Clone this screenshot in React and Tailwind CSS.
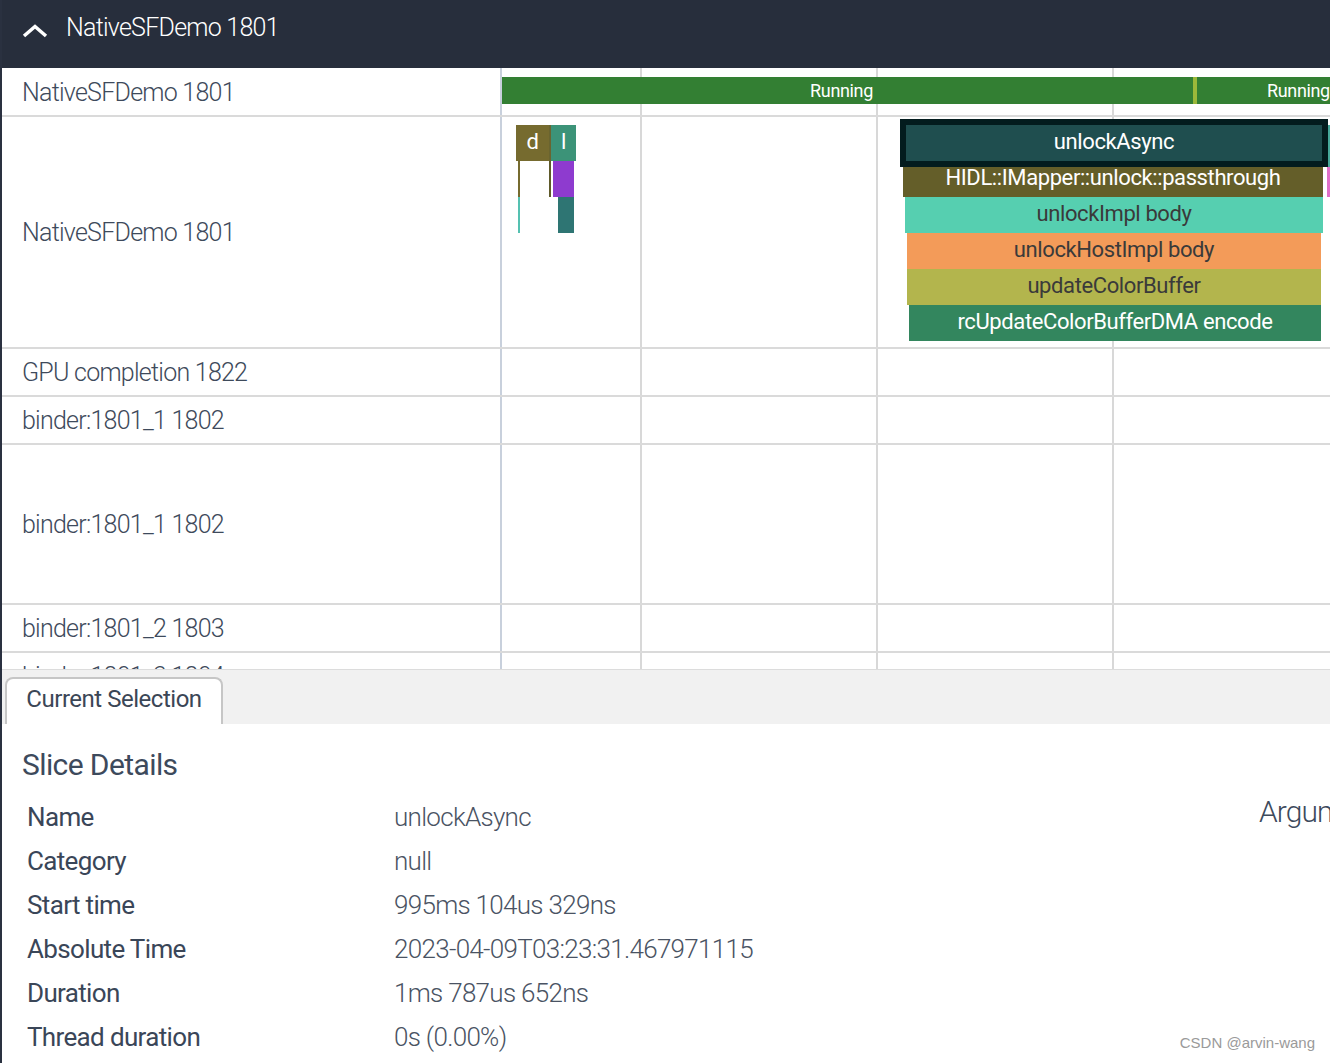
import React from "react";

const rows = [
  { name: "NativeSFDemo 1801", h: "h-[49px]", kind: "running" },
  { name: "NativeSFDemo 1801", h: "h-[232px]", kind: "slices" },
  { name: "GPU completion 1822", h: "h-[48px]" },
  { name: "binder:1801_1 1802", h: "h-[48px]" },
  { name: "binder:1801_1 1802", h: "h-[160px]" },
  { name: "binder:1801_2 1803", h: "h-[48px]" },
  { name: "binder:1801_3 1804", h: "h-[48px]" },
];

const details = [
  ["Name", "unlockAsync"],
  ["Category", "null"],
  ["Start time", "995ms 104us 329ns"],
  ["Absolute Time", "2023-04-09T03:23:31.467971115"],
  ["Duration", "1ms 787us 652ns"],
  ["Thread duration", "0s (0.00%)"],
];

const font = "font-['Roboto','Noto_Sans',sans-serif]";

const GridLines = () => (
  <>
    <div className="absolute top-0 bottom-0 left-[138px] w-[2px] bg-[#d8d8d8]" />
    <div className="absolute top-0 bottom-0 left-[374px] w-[2px] bg-[#d8d8d8]" />
    <div className="absolute top-0 bottom-0 left-[610px] w-[2px] bg-[#d8d8d8]" />
  </>
);

// a slice on the timeline canvas: x / y in page coordinates
const Slice = ({ x, w, y, color, text, dark }) => (
  <div
    className={`absolute h-[36px] flex items-center justify-center pb-[3px] overflow-hidden whitespace-nowrap text-[22px] tracking-[-0.018em] ${
      dark ? "text-[#3a3a3a]" : "text-white"
    } ${color}`}
    style={{ left: x - 502, width: w, top: y - 117 }}
  >
    {text}
  </div>
);

const RunningTrack = () => (
  <div className="relative flex h-full pt-[9px] pb-[11px] text-white text-[18px] tracking-[-0.02em]">
    <div className="w-[691px] shrink-0 bg-[#337f33] flex items-center justify-center pr-[12px]">Running</div>
    <div className="w-[4px] shrink-0 bg-[#9bb83a]" />
    <div className="flex-1 bg-[#337f33] flex items-center pl-[70px] whitespace-nowrap overflow-hidden">Running</div>
  </div>
);

const SliceTrack = () => (
  <>
    {/* small slices on the left */}
    <Slice x={516} w={33} y={125} color="bg-[#766b2f]" text="d" />
    <div className="absolute left-[47px] top-[8px] w-[2px] h-[36px] bg-[#6a6430]" />
    <Slice x={551} w={25} y={125} color="bg-[#3c9378]" text="l" />
    <div className="absolute left-[16px] top-[44px] w-[2px] h-[36px] bg-[#766b2f]" />
    <div className="absolute left-[47px] top-[44px] w-[2px] h-[36px] bg-[#5f5a2a]" />
    <div className="absolute left-[51px] top-[44px] w-[21px] h-[36px] bg-[#8e3bcf]" />
    <div className="absolute left-[16px] top-[80px] w-[2px] h-[36px] bg-[#55c1b1]" />
    <div className="absolute left-[56px] top-[80px] w-[16px] h-[36px] bg-[#2e7573]" />

    {/* stack on the right */}
    <Slice x={903} w={420} y={161} color="bg-[#645e29]" text="HIDL::IMapper::unlock::passthrough" />
    <Slice x={905} w={418} y={197} color="bg-[#56cfb0]" text="unlockImpl body" dark />
    <Slice x={907} w={414} y={233} color="bg-[#f39b59]" text="unlockHostImpl body" dark />
    <Slice x={907} w={414} y={269} color="bg-[#b3b54d]" text="updateColorBuffer" dark />
    <Slice x={909} w={412} y={305} color="bg-[#33865e]" text="rcUpdateColorBufferDMA encode" />
    <div className="absolute left-[826px] top-[8px] w-[4px] h-[42px] bg-[#47a89a]" />
    <div className="absolute left-[825px] top-[50px] w-[4px] h-[30px] bg-[#e070c8]" />

    {/* selected slice */}
    <div className="absolute left-[398px] top-[2px] w-[428px] h-[48px] border-[6px] border-[#031c1e] bg-[#1f4e4f] flex items-center justify-center pb-[3px] text-white text-[22px] tracking-[-0.018em]">
      unlockAsync
    </div>
  </>
);

export default function App() {
  return (
    <div className={`${font} w-[1330px] h-[1063px] overflow-hidden relative bg-white border-l-2 border-[#2a3140] flex flex-col`}>
      {/* header */}
      <div className="h-[68px] shrink-0 bg-[#272e3c] flex items-center pl-[20px] pb-[12px]">
        <svg width="26" height="14" viewBox="0 0 26 14" className="mt-[6px]">
          <polyline points="2,12 13,2.5 24,12" fill="none" stroke="white" strokeWidth="3.5" />
        </svg>
        <span className="ml-[18px] text-white text-[25px] font-light tracking-[-0.03em]">NativeSFDemo 1801</span>
      </div>

      {/* tracks */}
      <div className="h-[601px] shrink-0 overflow-hidden">
        {rows.map((r, i) => (
          <div key={i} className={`${r.h} flex border-b-2 border-[#dadada]`}>
            <div className="w-[498px] shrink-0 flex items-center pl-[20px] pt-[2px] text-[25px] font-light text-[#3e4a5b] tracking-[-0.03em] whitespace-nowrap">
              {r.name}
            </div>
            <div className="relative flex-1 border-l-2 border-[#c8d0dc]">
              <GridLines />
              {r.kind === "running" && <RunningTrack />}
              {r.kind === "slices" && <SliceTrack />}
            </div>
          </div>
        ))}
      </div>

      {/* tab bar */}
      <div className="h-[55px] shrink-0 bg-[#f1f1f1] border-t border-[#dcdcdc] flex items-end pl-[3px]">
        <div className="w-[218px] h-[47px] bg-white border-2 border-b-0 border-[#c6c6c6] rounded-t-[8px] flex items-center justify-center pb-[5px] text-[24px] text-[#3b4656] tracking-[-0.02em]">
          Current Selection
        </div>
      </div>

      {/* details */}
      <div className="flex-1 flex">
        <div className="w-[1257px] shrink-0 pl-[20px] pt-[20px]">
          <div className="h-[40px] flex items-center text-[30px] text-[#3d4a5c] tracking-[-0.02em]">Slice Details</div>
          <div className="mt-[11px] pl-[5px]">
            {details.map(([k, v]) => (
              <div key={k} className="h-[44px] flex items-center">
                <div className="w-[367px] shrink-0 text-[26px] text-[#3a4658] tracking-[-0.025em]">{k}</div>
                <div className="text-[26px] font-light text-[#4a5363] tracking-[-0.027em]">{v}</div>
              </div>
            ))}
          </div>
        </div>
        <div className="pt-[68px] text-[30px] font-light text-[#3d4a5c] whitespace-nowrap tracking-[-0.03em] leading-[40px]">
          Arguments
        </div>
      </div>

      <div className="absolute right-[15px] bottom-[9px] font-['Liberation_Sans',sans-serif] text-[15px] text-[#9a9a9a]">
        CSDN @arvin-wang
      </div>
    </div>
  );
}
